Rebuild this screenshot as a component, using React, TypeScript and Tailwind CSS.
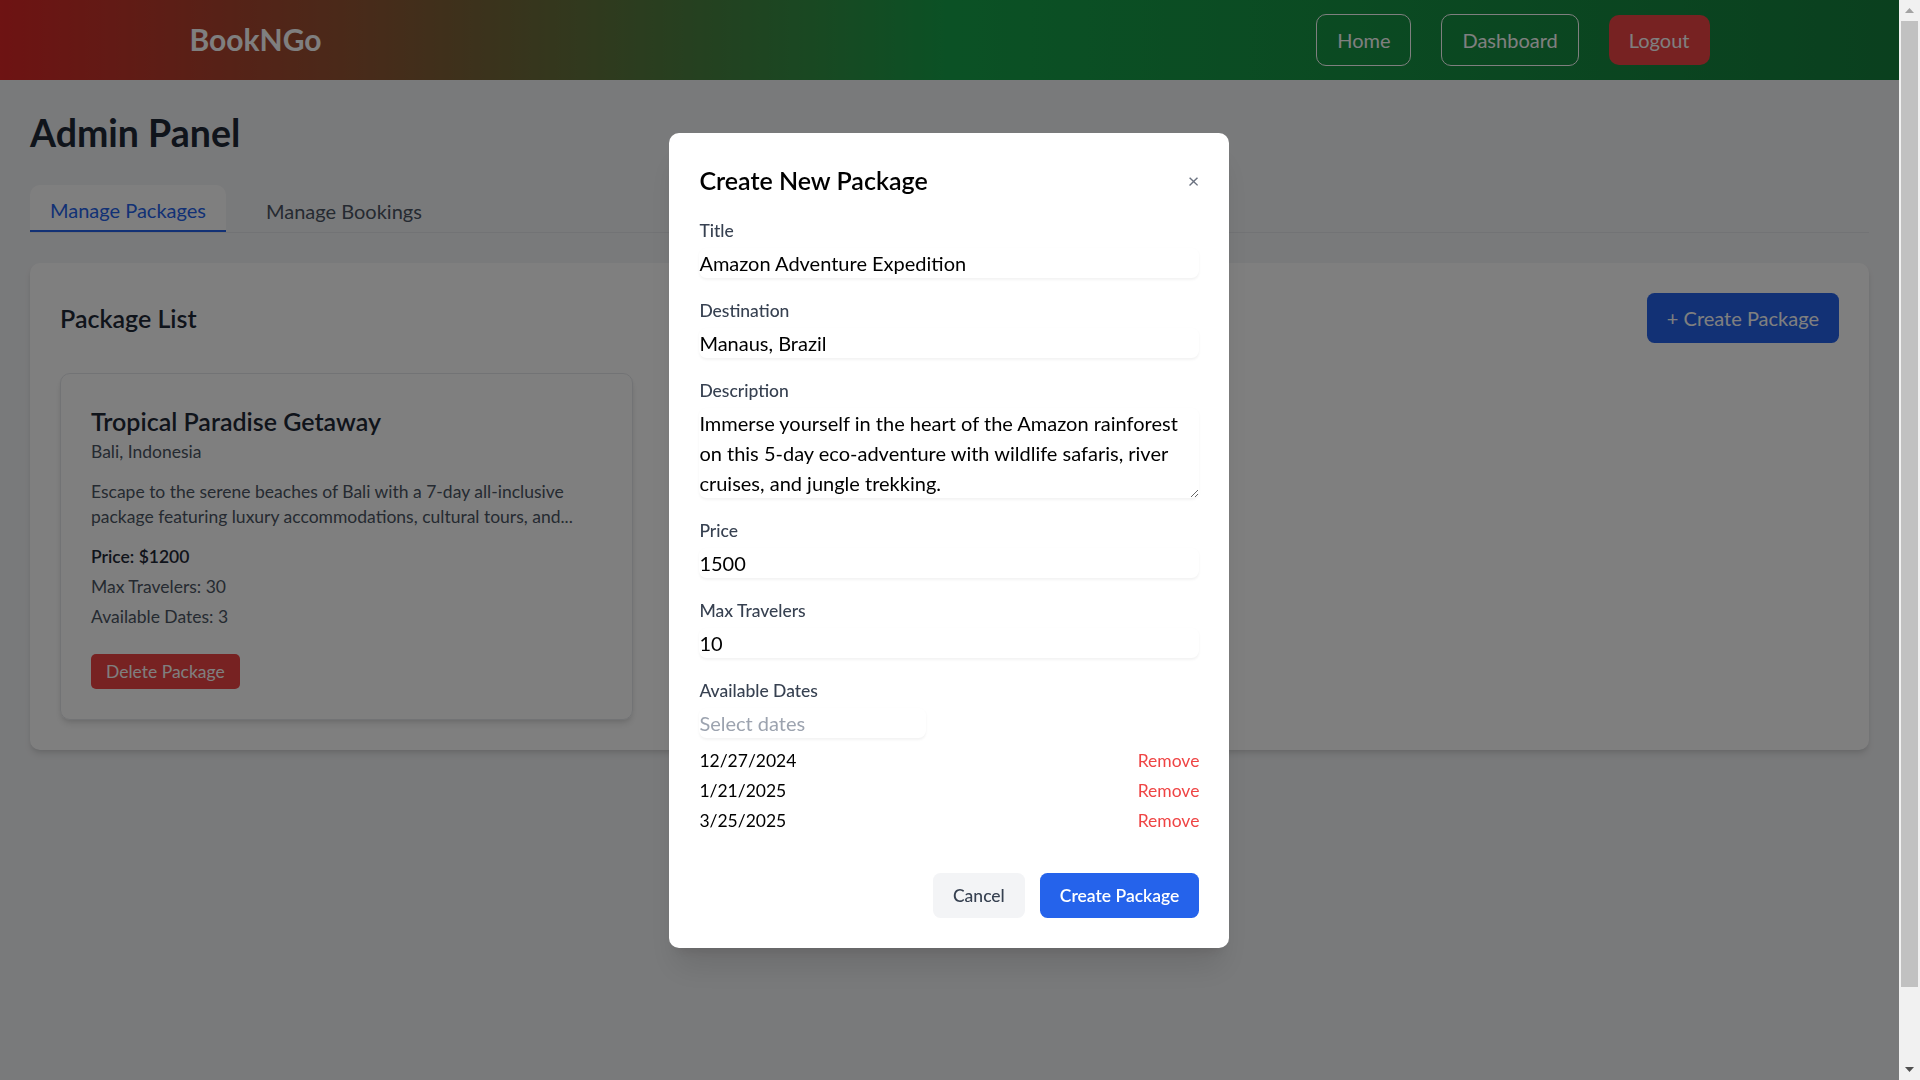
import React, { useState } from 'react';

interface Pkg {
  id: number;
  title: string;
  destination: string;
  description: string;
  price: number;
  maxTravelers: number;
  dates: number;
}

const packages: Pkg[] = [
  {
    id: 1,
    title: 'Tropical Paradise Getaway',
    destination: 'Bali, Indonesia',
    description:
      'Escape to the serene beaches of Bali with a 7-day all-inclusive package featuring luxury accommodations, cultural tours, and spa treatments.',
    price: 1200,
    maxTravelers: 30,
    dates: 3,
  },
];

const selectedDates = ['12/27/2024', '1/21/2025', '3/25/2025'];

const truncate = (s: string, n: number) => (s.length > n ? s.substring(0, n).trimEnd() + '...' : s);

const Field: React.FC<{ label: string; children: React.ReactNode }> = ({ label, children }) => (
  <div>
    <label className="block text-sm font-medium text-[#374151]">{label}</label>
    {children}
  </div>
);

const inputClass = 'mt-1 block w-full rounded-md shadow-xs bg-transparent text-black outline-none';

const CreatePackageModal: React.FC = () => (
  <div className="fixed inset-0 right-[17px] bg-black/50 flex items-center justify-center">
    <div className="w-full max-w-md bg-white rounded-lg shadow-xl p-6">
      <div className="flex items-center justify-between mb-4">
        <h2 className="text-xl font-semibold text-black">Create New Package</h2>
        <button className="text-[#6b7280] leading-none">×</button>
      </div>
      <form className="space-y-4" onSubmit={(e) => e.preventDefault()}>
        <Field label="Title">
          <input className={inputClass} defaultValue="Amazon Adventure Expedition" />
        </Field>
        <Field label="Destination">
          <input className={inputClass} defaultValue="Manaus, Brazil" />
        </Field>
        <Field label="Description">
          <textarea
            rows={3}
            className={inputClass}
            defaultValue="Immerse yourself in the heart of the Amazon rainforest on this 5-day eco-adventure with wildlife safaris, river cruises, and jungle trekking."
          />
        </Field>
        <Field label="Price">
          <input className={inputClass} defaultValue="1500" />
        </Field>
        <Field label="Max Travelers">
          <input className={inputClass} defaultValue="10" />
        </Field>
        <div>
          <label className="block text-sm font-medium text-[#374151]">Available Dates</label>
          <input
            className="mt-1 block w-[181px] rounded-md shadow-xs bg-transparent outline-none placeholder:text-[#9ca3af]"
            placeholder="Select dates"
          />
          <ul className="mt-2 space-y-1">
            {selectedDates.map((d) => (
              <li key={d} className="flex items-center justify-between text-sm text-black">
                <span>{d}</span>
                <button type="button" className="text-[#ef4444]">Remove</button>
              </li>
            ))}
          </ul>
        </div>
        <div className="flex justify-end gap-3 pt-4">
          <button type="button" className="px-4 py-2 text-sm font-medium text-[#374151] bg-[#f3f4f6] rounded-md">
            Cancel
          </button>
          <button type="submit" className="px-4 py-2 text-sm font-semibold text-white bg-[#2563eb] rounded-md">
            Create Package
          </button>
        </div>
      </form>
    </div>
  </div>
);

// classic browser scrollbar as seen in the screenshot
const Scrollbar: React.FC = () => (
  <div className="fixed top-0 right-0 h-[1080px] w-[21px] bg-[#f1f1f1] flex flex-col">
    <div className="h-[21px] flex items-center justify-center">
      <svg width="9" height="5" viewBox="0 0 9 5">
        <path d="M4.5 0L9 5H0z" fill="#a3a3a3" />
      </svg>
    </div>
    <div className="mx-[2px] h-[966px] bg-[#c1c1c1]" />
    <div className="flex-1" />
    <div className="h-[21px] flex items-center justify-center">
      <svg width="9" height="5" viewBox="0 0 9 5">
        <path d="M0 0H9L4.5 5z" fill="#505050" />
      </svg>
    </div>
  </div>
);

export default function App() {
  const [tab, setTab] = useState<'packages' | 'bookings'>('packages');

  const tabClass = (active: boolean) =>
    `px-4 pt-2 pb-1 leading-6 rounded-t-lg ${
      active ? 'bg-white text-[#2563eb] border-b-2 border-[#2563eb]' : 'text-[#4b5563]'
    }`;

  return (
    <div className="pr-[21px]">
      <div className="[zoom:1.25] bg-[#f3f4f6] font-['Lato',sans-serif] text-[#111827]">
        <header className="h-16 bg-[linear-gradient(to_right,#dc2626,#16a34a,#15803d)]">
          <div className="max-w-7xl mx-auto px-8 h-full flex items-center justify-between">
            <span className="text-2xl font-bold text-white">BookNGo</span>
            <nav className="flex items-center gap-6">
              <button className="px-4 py-2 border border-white rounded-lg text-white">Home</button>
              <button className="px-4 py-2 border border-white rounded-lg text-white">Dashboard</button>
              <button className="px-4 py-2 bg-[#ef4444] rounded-lg text-white">Logout</button>
            </nav>
          </div>
        </header>

        <main className="min-h-[864px] p-6">
          <h1 className="text-3xl font-bold text-[#1f2937]">Admin Panel</h1>

          <div className="mt-6 mb-6 flex gap-4 border-b border-[#e5e7eb]">
            <button onClick={() => setTab('packages')} className={tabClass(tab === 'packages')}>
              Manage Packages
            </button>
            <button onClick={() => setTab('bookings')} className={tabClass(tab === 'bookings')}>
              Manage Bookings
            </button>
          </div>

          <section className="bg-white rounded-lg shadow-md p-6">
            <div className="flex items-center justify-between mb-6">
              <h2 className="text-xl font-semibold text-[#1f2937]">Package List</h2>
              <button className="px-4 py-2 bg-[#2563eb] text-white rounded-md">+ Create Package</button>
            </div>
            <div className="grid grid-cols-3 gap-6">
              {packages.map((p) => (
                <div key={p.id} className="border border-[#e5e7eb] rounded-lg shadow-md p-6">
                  <h3 className="text-xl font-semibold text-[#1f2937]">{p.title}</h3>
                  <p className="text-sm text-[#4b5563]">{p.destination}</p>
                  <p className="mt-3 text-sm text-[#4b5563]">{truncate(p.description, 125)}</p>
                  <p className="mt-3 text-sm font-semibold text-[#1f2937]">{`Price: $${p.price}`}</p>
                  <p className="mt-1 text-sm text-[#4b5563]">{`Max Travelers: ${p.maxTravelers}`}</p>
                  <p className="mt-1 text-sm text-[#4b5563]">{`Available Dates: ${p.dates}`}</p>
                  <button className="mt-5 px-3 py-1 text-sm text-white bg-[#ef4444] rounded">Delete Package</button>
                </div>
              ))}
            </div>
          </section>
        </main>

        <CreatePackageModal />
      </div>
      <Scrollbar />
    </div>
  );
}
